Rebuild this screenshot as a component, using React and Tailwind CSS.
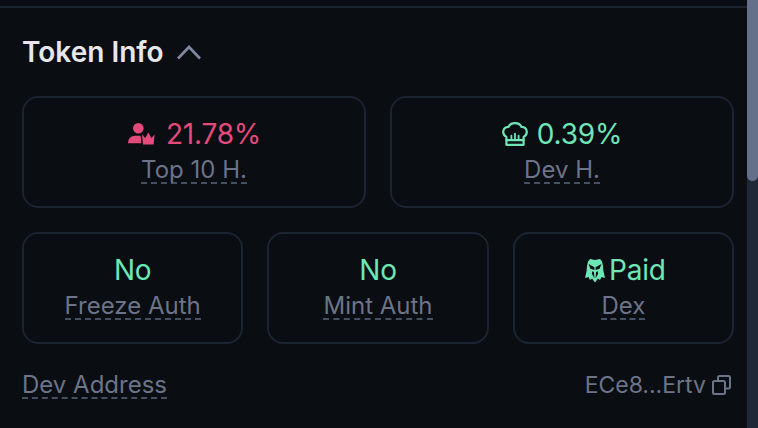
import React from 'react';

const ChevronUp = () => (
    <svg width="24" height="15" viewBox="0 0 24 15" fill="none" stroke="#7f8aa0" strokeWidth="2.6">
        <path d="M1 13.5 L12 2 L23 13.5" />
    </svg>
);

const TopHolders = () => (
    <svg width="27" height="22" viewBox="0 0 27 22" fill="#e44a7b">
        <circle cx="10.3" cy="5.3" r="5.3" />
        <path d="M0 20.3 C0 15.5 3 12.7 7 12.7 L12.6 12.7 L13.4 20.3 Z" />
        <path d="M14 11.6 L17.2 15 L20.3 9.6 L23.4 15 L26.6 11.6 L25.6 21.6 L15 21.6 Z" />
    </svg>
);

const ChefHat = () => (
    <svg width="26" height="24" viewBox="0 0 26 24" fill="none" stroke="#6ee7b7" strokeWidth="2.2" strokeLinejoin="round" strokeLinecap="round">
        <path d="M4.4 15 C2.4 14 1.2 12 1.2 9.8 C1.2 6.8 3.6 4.6 6.6 4.8 C7.6 2.4 10 1.2 13 1.2 C16 1.2 18.4 2.4 19.4 4.8 C22.4 4.6 24.8 6.8 24.8 9.8 C24.8 12 23.6 14 21.6 15 L21.6 22.8 L4.4 22.8 Z" />
        <path d="M4.6 18.2 L21.4 18.2" />
        <path d="M9.4 13.6 L9.4 16.6 M13 11.6 L13 16.6 M16.6 13.6 L16.6 16.6" strokeWidth="1.8" />
    </svg>
);

const Eagle = () => (
    <svg width="20" height="25" viewBox="0 0 20 25" fill="#6ee7b7">
        <path d="M3 3.5 L5 1 L10 2 L15 1 L17 3.5 L18 8 L18.4 13 L20 20 L16.5 19 L15 22 L13 20.5 L10 24.5 L7 20.5 L5 22 L3.5 19 L0 20 L1.6 13 L2 8 Z" />
        <path d="M3.6 6 L9.4 9.2 L9.4 12 L5.4 10.8 Z M16.4 6 L10.6 9.2 L10.6 12 L14.6 10.8 Z M7.6 13 L6.8 15.4 L9.4 20.4 L9 14.4 Z M12.4 13 L13.2 15.4 L10.6 20.4 L11 14.4 Z" fill="#0a0d12" />
    </svg>
);

const CopyIcon = () => (
    <svg width="19" height="20" viewBox="0 0 19 20" fill="none" stroke="#6b7489" strokeWidth="2">
        <rect x="1" y="6" width="12" height="13" rx="1.5" />
        <path d="M6 6 L6 2.5 C6 1.7 6.7 1 7.5 1 L16.5 1 C17.3 1 18 1.7 18 2.5 L18 12 C18 12.8 17.3 13.5 16.5 13.5 L13 13.5" />
    </svg>
);

const Label = ({ children }) => (
    <span className="border-b-2 border-dashed border-[#465063] text-[24px] leading-[25px] text-[#6b7489]">{children}</span>
);

const Card = ({ icon, value, label, color, gap }) => (
    <div className="flex h-[112px] flex-1 flex-col items-center rounded-[16px] border-2 border-[#1b2430] pt-[18px]">
        <div className={`mb-[5px] flex h-[36px] items-center text-[28px] leading-[36px] tracking-[-0.2px] ${gap} ${color}`}>
            {icon}
            <span>{value}</span>
        </div>
        <Label>{label}</Label>
    </div>
);

export default function App() {
    return (
        <div className="flex h-[428px] w-[758px] overflow-hidden bg-[#0a0d12] font-['Inter',sans-serif]">
            <div className="flex flex-1 flex-col pt-[6px]">
                <div className="h-[2px] bg-[#1b2430]" />
                <div className="flex flex-col pl-[22px] pr-[13px]">
                    <div className="flex h-[88px] items-center gap-[13px]">
                        <h2 className="text-[28px] font-semibold text-[#e5e7eb]">Token Info</h2>
                        <ChevronUp />
                    </div>
                    <div className="flex gap-[24px]">
                        <Card icon={<TopHolders />} value="21.78%" label="Top 10 H." color="text-[#e44a7b]" gap="gap-[11px] pl-[1px]" />
                        <Card icon={<ChefHat />} value="0.39%" label="Dev H." color="text-[#6ee7b7]" gap="gap-[9px]" />
                    </div>
                    <div className="mt-[24px] flex gap-[24px]">
                        <Card value="No" label="Freeze Auth" color="text-[#6ee7b7]" gap="gap-0" />
                        <Card value="No" label="Mint Auth" color="text-[#6ee7b7]" gap="gap-0" />
                        <Card icon={<Eagle />} value="Paid" label="Dex" color="text-[#6ee7b7]" gap="gap-[4px] pl-[4px]" />
                    </div>
                    <div className="mt-[24px] flex items-center justify-between">
                        <Label>Dev Address</Label>
                        <div className="flex items-center gap-[6px] pr-[3px] text-[23px] text-[#6b7489]">
                            <span>ECe8...Ertv</span>
                            <CopyIcon />
                        </div>
                    </div>
                </div>
            </div>
            <div className="h-full w-[11px] bg-[#1f2937]">
                <div className="h-[181px] rounded-b-[6px] bg-[#64708a]" />
            </div>
        </div>
    );
}
